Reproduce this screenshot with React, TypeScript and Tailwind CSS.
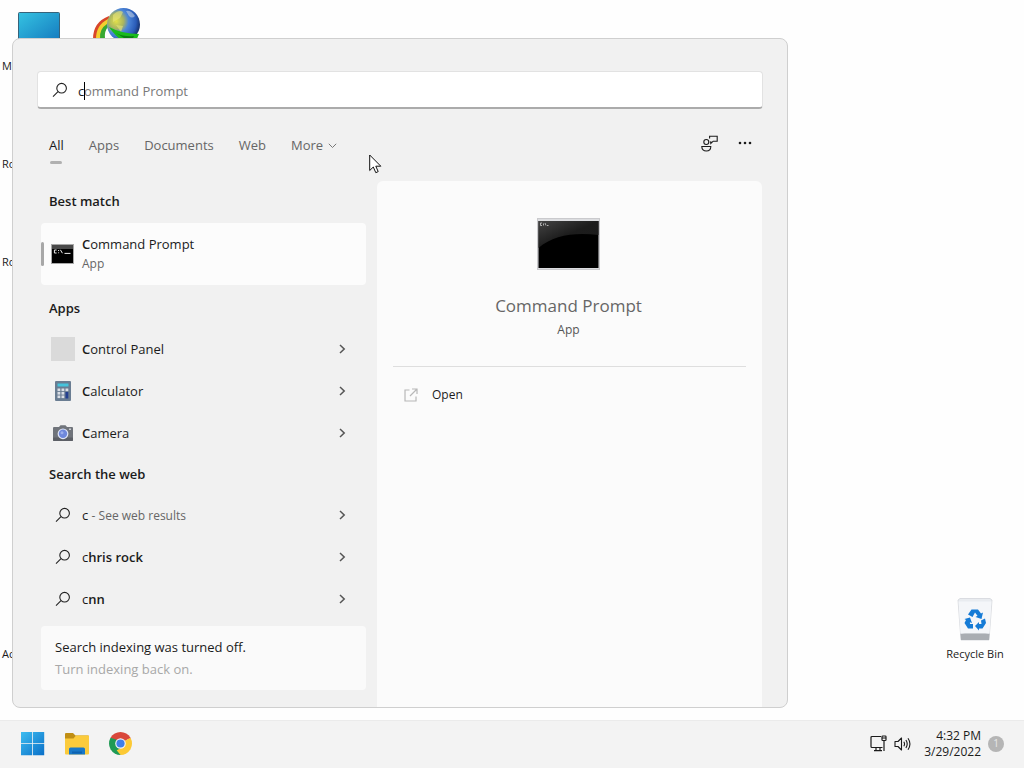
import type { ReactNode } from 'react';

const SearchIcon = () => (
  <svg width="16" height="16" viewBox="0 0 16 16" fill="none" stroke="#222" strokeWidth="1.1" aria-hidden="true">
    <circle cx="9.6" cy="6.2" r="4.8" />
    <path d="M6 9.7 L1 14.7" />
  </svg>
);

const ChevronRight = () => (
  <svg width="8" height="10" viewBox="0 0 8 10" fill="none" stroke="#555" strokeWidth="1.5" aria-hidden="true">
    <path d="M2 1 L6.2 5 L2 9" />
  </svg>
);

const ConsoleIcon = () => (
  <svg width="24" height="20" viewBox="0 0 24 20" aria-hidden="true">
    <rect x="0.5" y="0.5" width="22" height="19" fill="#000" stroke="#a8a8a8" />
    <rect x="1" y="1" width="21" height="4" fill="#4a4a4a" />
    <path d="M5.6 6 H3.4 V9 H5.6 M7.6 6 V7 M7.6 8.4 V9.2 M9.4 5.8 L11.4 9.2 M13.500 9.400 H19.500" fill="none" stroke="#eee" strokeWidth="1" />
  </svg>
);

const ConsoleIconLarge = () => (
  <svg width="64" height="54" viewBox="0 0 64 54" aria-hidden="true">
    <defs>
      <linearGradient id="gloss" x1="0" y1="0" x2="1" y2="1">
        <stop offset="0" stopColor="#444" />
        <stop offset="0.5" stopColor="#1c1c1c" />
        <stop offset="1" stopColor="#1a1a1a" />
      </linearGradient>
    </defs>
    <rect x="0.5" y="0.5" width="62" height="51" fill="#dcdde0" stroke="#cacacd" />
    <rect x="1.500" y="3" width="60" height="47" fill="#000" />
    <path d="M1.500 3 H61.500 V17 C38 14 16 17 1.500 30 Z" fill="url(#gloss)" />
    <path d="M5 5 H3.500 V7.500 H5 M6.500 5.500 V7.500 M8 5 L9 7.500 M10 7.500 H11.500" fill="none" stroke="#ccc" strokeWidth="0.8" />
  </svg>
);

const CalculatorIcon = () => (
  <svg width="16" height="20" viewBox="0 0 16 20" aria-hidden="true">
    <rect width="16" height="20" rx="1" fill="#6a7d92" />
    <rect x="2.500" y="2.500" width="11" height="3" fill="#45c4dc" />
    {[7.5, 11, 14.5].map((y) => (
      <g key={y} fill="#d9dee5">
        <rect x="2.500" y={y} width="2.800" height="2.600" />
        <rect x="6.500" y={y} width="2.800" height="2.600" />
      </g>
    ))}
    <rect x="10.500" y="7.500" width="2.800" height="2.600" fill="#d9dee5" />
    <rect x="10.500" y="11" width="2.800" height="6.500" fill="#24408f" />
  </svg>
);

const CameraIcon = () => (
  <svg width="20" height="16" viewBox="0 0 20 16" aria-hidden="true">
    <path d="M1 2 H6 L7.500 0.300 H12.500 L14 2 H19 Q20 2 20 3 V15 Q20 16 19 16 H1 Q0 16 0 15 V3 Q0 2 1 2 Z" fill="#70747b" />
    <rect y="12.500" width="20" height="3.500" rx="1" fill="#5c5f66" />
    <circle cx="10" cy="8.800" r="5.400" fill="#dfe5f7" />
    <circle cx="10" cy="8.800" r="4.200" fill="#6f88dc" />
    <circle cx="9" cy="7.800" r="1.500" fill="#9db0ec" />
    <rect x="16" y="3.500" width="2" height="1.500" fill="#c9cbd0" />
  </svg>
);

const FeedbackIcon = () => (
  <svg width="17" height="17" viewBox="0 0 17 17" fill="none" stroke="#1b1b1b" strokeWidth="1.1" aria-hidden="true">
    <circle cx="5.300" cy="7" r="2.500" />
    <path d="M0.800 11.500 H9.800 C9.800 14.500 8 16 5.300 16 C2.600 16 0.800 14.500 0.800 11.500 Z" />
    <path d="M8.600 3.600 V1.200 H16.200 V6.200 H12.200 L9.800 8.400 V6.200" />
  </svg>
);

const OpenIcon = () => (
  <svg width="14" height="14" viewBox="0 0 14 14" fill="none" stroke="#b8b8b8" strokeWidth="1.2" aria-hidden="true">
    <path d="M5.500 2 H1 V13 H12 V8.500" />
    <path d="M8 1 H13 V6 M13 1 L6 8" />
  </svg>
);

const WindowsLogo = () => (
  <svg width="24" height="24" viewBox="0 0 24 24" aria-hidden="true">
    <defs>
      <linearGradient id="win" x1="0" y1="0" x2="1" y2="1" gradientUnits="objectBoundingBox">
        <stop offset="0" stopColor="#3dbdf0" />
        <stop offset="1" stopColor="#0a6fc8" />
      </linearGradient>
    </defs>
    <path d="M0 0 H11.200 V11.200 H0 Z M12 0 H23.200 V11.200 H12 Z M0 12 H11.200 V23.200 H0 Z M12 12 H23.200 V23.200 H12 Z" fill="url(#win)" />
  </svg>
);

const FolderIcon = () => (
  <svg width="24" height="22" viewBox="0 0 24 22" aria-hidden="true">
    <path d="M0 1 Q0 0 1 0 H8 L10.500 2.500 H23 Q24 2.500 24 3.500 V10 H0 Z" fill="#c08e14" />
    <path d="M0 5.500 H8.500 L11 2.500 H23 Q24 2.500 24 3.500 V20.500 Q24 21.500 23 21.500 H1 Q0 21.500 0 20.500 Z" fill="#fbcb3c" />
    <path d="M4 21.500 V16 Q4 14.500 5.500 14.500 H18.500 Q20 14.500 20 16 V21.500 Z" fill="#1878c8" />
    <rect x="7" y="18.500" width="10" height="2" fill="#0d62b0" />
  </svg>
);

const ChromeIcon = () => (
  <svg width="23" height="23" viewBox="0 0 24 24" aria-hidden="true">
    <path d="M12 12 L1.610 6 A12 12 0 0 1 22.390 6 Z" fill="#d9473b" />
    <path d="M12 12 L22.390 6 A12 12 0 0 1 12 24 Z" fill="#fcc934" />
    <path d="M12 12 L12 24 A12 12 0 0 1 1.610 6 Z" fill="#1f9a55" />
    <path d="M12 6.500 H22.600 L22.390 6 L12 4 Z" fill="#d9473b" />
    <path d="M16.800 14.700 L12 24 L8 19 Z" fill="#fcc934" />
    <path d="M7.200 14.700 L1.610 6 L8 8 Z" fill="#1f9a55" />
    <circle cx="12" cy="12" r="5.500" fill="#f5f5f5" />
    <circle cx="12" cy="12" r="4.300" fill="#3f7fe8" />
  </svg>
);

const NetworkIcon = () => (
  <svg width="18" height="17" viewBox="0 0 18 17" fill="none" stroke="#1b1b1b" strokeWidth="1.2" aria-hidden="true">
    <path d="M11 1.500 H2 Q1 1.500 1 2.500 V11.500 Q1 12.500 2 12.500 H12.500" />
    <path d="M6 12.500 V15.500 M10 12.500 V15.500 M4 15.600 H12" />
    <rect x="12" y="1" width="4" height="4.500" rx="0.800" />
    <path d="M14 5.500 V16 M12 3 H16" />
  </svg>
);

const SpeakerIcon = () => (
  <svg width="18" height="16" viewBox="0 0 18 16" fill="none" stroke="#1b1b1b" strokeWidth="1.1" aria-hidden="true">
    <path d="M1 5.500 H4 L7.500 2 V14 L4 10.500 H1 Z" strokeLinejoin="round" />
    <path d="M9.800 5.700 Q11.300 8 9.800 10.300 M11.900 4 Q14.500 8 11.900 12 M14 2.300 Q17.900 8 14 13.700" />
  </svg>
);

const MonitorIcon = () => (
  <svg width="42" height="32" viewBox="0 0 42 32" aria-hidden="true">
    <defs>
      <linearGradient id="screen" x1="0" y1="0" x2="1" y2="1">
        <stop offset="0" stopColor="#35c3e2" />
        <stop offset="1" stopColor="#1377bd" />
      </linearGradient>
    </defs>
    <rect x="0.500" y="0.500" width="41" height="31" rx="1" fill="url(#screen)" stroke="#37637a" />
  </svg>
);

const DownloadManagerIcon = () => (
  <svg width="48" height="40" viewBox="0 0 48 40" aria-hidden="true">
    <defs>
      <radialGradient id="globe" cx="0.28" cy="0.4" r="0.75">
        <stop offset="0" stopColor="#e3e04a" />
        <stop offset="0.3" stopColor="#a9b560" />
        <stop offset="0.5" stopColor="#4c86d8" />
        <stop offset="0.8" stopColor="#2a5cb8" />
        <stop offset="1" stopColor="#142c62" />
      </radialGradient>
    </defs>
    <path d="M17 9 Q1 15 1 32 H9 Q8 20 17 14 Z" fill="#d8462a" />
    <path d="M16 12 Q4 18 4 32 H11 Q10 21 17 16 Z" fill="#f3cf2f" />
    <path d="M15 17 Q7 22 8 32 H13 Q12 24 16 20 Z" fill="#38a832" />
    <circle cx="31.500" cy="17.500" r="16.500" fill="url(#globe)" />
    <path d="M34 4 Q39 3 43 9 Q40 12 37 9 Z" fill="#d8e0e8" opacity="0.5" />
    <path d="M21 8 Q27 2 31 5 L28 11 L21 15 Z M24 18 L31 19 L29 25 Z" fill="#e8e67a" opacity="0.6" />
    <path d="M17 20 Q30 27 47 27 L44 34 H31 Q24 30 17 20 Z" fill="#19bb1c" />
    <path d="M24 26 Q32 30 42 29 L41 31 H32 Z" fill="#0a7d12" />
  </svg>
);

const RecycleBinIcon = () => (
  <svg width="36" height="43" viewBox="0 0 36 43" aria-hidden="true">
    <path d="M1 2 L3 0.500 H33 L35 2 L32 42 H4 Z" fill="#e9ecf0" stroke="#d3d6da" strokeWidth="0.800" />
    <path d="M1.500 3.500 H34.500 L32.500 35 H3.500 Z" fill="#f4f6f9" />
    <path d="M3.500 36 L8 35.500 H28 L32.500 36 L32 42 H4 Z" fill="#a9adb2" />
    <g fill="#157bd6">
      <path d="M11 16.500 L14.500 11.500 H21 L24 15.500 L26 14.500 L24.500 21 L18.500 19 L20.500 17.800 L18 14.500 L15.500 19 Z" />
      <path d="M24 22.500 L28 20.500 L29 25 L25.500 30.500 H22 V32.500 L18 28 L22 24 V26 H24.500 Z" />
      <path d="M16 30.500 H11 L7.500 25 L9 22 L7.500 21 L13 19.500 L15 25 L12.900 24.300 L13 26 H16 Z" />
    </g>
  </svg>
);

interface ResultRowProps {
  icon: ReactNode;
  children: ReactNode;
}

const ResultRow = ({ icon, children }: ResultRowProps) => (
  <li>
    <button type="button" className="flex h-[42px] w-full items-center pl-2.5 pr-5 text-left">
      <span className="flex w-6 shrink-0 justify-center">{icon}</span>
      <span className="ml-[7px] flex-1 pt-0.5">{children}</span>
      <ChevronRight />
    </button>
  </li>
);

const SectionTitle = ({ children }: { children: ReactNode }) => (
  <h2 className="flex h-10 items-center pl-2 pt-0.5 font-semibold">{children}</h2>
);

const apps = [
  { name: 'Control Panel', icon: <span className="size-6 bg-[#dadada]" /> },
  { name: 'Calculator', icon: <CalculatorIcon /> },
  { name: 'Camera', icon: <CameraIcon /> },
];

const SearchPanel = () => (
  <section
    aria-label="Search"
    className="relative flex min-w-0 flex-1 flex-col rounded-lg border border-[#cfcfcf] bg-[#f1f1f1]"
  >
    <label className="mx-6 mt-8 flex h-[38px] items-center rounded-sm border border-b-2 border-[#e2e2e2] border-b-[#ababab] bg-white pl-3.5">
      <SearchIcon />
      <span className="relative ml-2.5 mt-0.5 flex-1">
        <input
          type="text"
          aria-label="Search query"
          defaultValue="c"
          className="block w-full bg-transparent leading-5 outline-none"
        />
        <span className="pointer-events-none absolute left-1.5 top-0 flex items-center leading-5 text-[#7a7a7a]">
          <span className="absolute left-0 h-[18px] w-px bg-black" />
          ommand Prompt
        </span>
      </span>
    </label>

    <div className="flex h-[72px] items-center pl-9 pr-[31px]">
      <nav className="flex flex-1 items-center gap-[25px] pt-0.5 text-[#666]">
        <button type="button" className="relative text-[#1b1b1b]">
          All
          <span className="absolute inset-x-0 -bottom-2 mx-auto h-[3px] w-3 rounded-full bg-[#b0b0b0]" />
        </button>
        <button type="button">Apps</button>
        <button type="button">Documents</button>
        <button type="button">Web</button>
        <button type="button" className="flex items-center gap-[5px]">
          More
          <svg width="9" height="6" viewBox="0 0 9 6" fill="none" stroke="#777" aria-hidden="true">
            <path d="M0.800 0.800 L4.500 4.500 L8.200 0.800" />
          </svg>
        </button>
      </nav>
      <div className="flex items-center gap-5 pb-1">
        <button type="button" aria-label="Feedback">
          <FeedbackIcon />
        </button>
        <button type="button" aria-label="More options" className="pr-1">
          <svg width="14" height="4" viewBox="0 0 14 4" fill="#1b1b1b" aria-hidden="true">
            <circle cx="2" cy="2" r="1.300" />
            <circle cx="7" cy="2" r="1.300" />
            <circle cx="12" cy="2" r="1.300" />
          </svg>
        </button>
      </div>
    </div>

    <div className="flex flex-1 gap-[11px] pl-7 pr-[25px]">
      {/* Results */}
      <div className="w-[325px] shrink-0">
        <SectionTitle>Best match</SectionTitle>
        <button
          type="button"
          className="mb-[3px] mt-0.5 flex h-[62px] w-full items-center rounded-sm bg-[#fcfcfc] text-left"
        >
          <span className="h-6 w-[3px] rounded-full bg-[#a8a8a8]" />
          <span className="ml-[7px]">
            <ConsoleIcon />
          </span>
          <span className="ml-[7px]">
            <span className="block leading-5">
              <span className="font-semibold">C</span>ommand Prompt
            </span>
            <span className="block text-xs leading-5 text-[#666]">App</span>
          </span>
        </button>

        <SectionTitle>Apps</SectionTitle>
        <ul>
          {apps.map((app) => (
            <ResultRow key={app.name} icon={app.icon}>
              <span className="font-semibold">{app.name[0]}</span>
              {app.name.slice(1)}
            </ResultRow>
          ))}
        </ul>

        <SectionTitle>Search the web</SectionTitle>
        <ul>
          <ResultRow icon={<SearchIcon />}>
            c <span className="text-xs text-[#666]">- See web results</span>
          </ResultRow>
          <ResultRow icon={<SearchIcon />}>
            c<span className="font-semibold">hris rock</span>
          </ResultRow>
          <ResultRow icon={<SearchIcon />}>
            c<span className="font-semibold">nn</span>
          </ResultRow>
        </ul>

        <div className="mt-1.5 flex h-16 flex-col justify-center rounded-sm bg-[#fafafa] pl-3.5">
          <p className="leading-[22px]">Search indexing was turned off.</p>
          <a href="#indexing" className="leading-[22px] text-[#a8a8a8]">
            Turn indexing back on.
          </a>
        </div>
      </div>

      {/* Preview of the selected result */}
      <div className="flex min-w-0 flex-1 flex-col rounded-t-md bg-[#fbfbfb] px-4 pt-[37px]">
        <div className="flex flex-col items-center border-b border-[#dedede] pb-[26px] pr-0.5">
          <ConsoleIconLarge />
          <h1 className="mt-[22px] text-[17px] leading-6 text-[#666]">Command Prompt</h1>
          <p className="mt-0.5 text-xs leading-5 text-[#555]">App</p>
        </div>
        <button type="button" className="mt-3.5 flex h-7 items-center gap-3.5 pl-[11px] text-xs">
          <OpenIcon />
          Open
        </button>
      </div>
    </div>
  </section>
);

const Taskbar = () => (
  <footer className="flex h-12 shrink-0 items-center border-t border-[#ebebeb] bg-[#f3f3f3] pb-0.5 pl-[21px] pr-5">
    <div className="flex flex-1 items-center gap-5">
      <button type="button" aria-label="Start">
        <WindowsLogo />
      </button>
      <button type="button" aria-label="File Explorer">
        <FolderIcon />
      </button>
      <button type="button" aria-label="Google Chrome">
        <ChromeIcon />
      </button>
    </div>
    <div className="flex items-center">
      <button type="button" aria-label="Network">
        <NetworkIcon />
      </button>
      <button type="button" aria-label="Volume" className="ml-1.5">
        <SpeakerIcon />
      </button>
      <div className="ml-3 text-right text-xs leading-4">
        <p>4:32 PM</p>
        <p>3/29/2022</p>
      </div>
      <span className="ml-[7px] flex size-4 items-center justify-center rounded-full bg-[#b5b5b5] text-[10px] text-[#e8e8e8]">
        1
      </span>
    </div>
  </footer>
);

export default function App() {
  return (
    <div className="flex min-h-screen flex-col overflow-hidden bg-[#fefefe] font-['Open_Sans','Noto_Sans',sans-serif] text-[13px] text-[#1b1b1b]">
      <main className="relative flex flex-1 pb-3 pl-3 pt-[38px]">
        {/* Desktop shortcuts, partly under the search panel */}
        <div className="absolute left-[18px] top-3">
          <MonitorIcon />
        </div>
        <div className="absolute left-[92px] top-[7px]">
          <DownloadManagerIcon />
        </div>
        <div className="text-[11px] leading-4">
          <span className="absolute left-0.5 top-[58px]">M</span>
          <span className="absolute left-0.5 top-[156px]">Ro</span>
          <span className="absolute left-0.5 top-[254px]">Ro</span>
          <span className="absolute left-0.5 top-[646px]">Ac</span>
        </div>

        <SearchPanel />

        <div className="flex w-[236px] shrink-0 flex-col items-end justify-end pb-[46px] pr-3">
          <a href="#recycle-bin" className="flex w-[74px] flex-col items-center text-[11px] leading-4">
            <RecycleBinIcon />
            <span className="mt-[5px]">Recycle Bin</span>
          </a>
        </div>

        {/* Mouse pointer */}
        <svg className="absolute left-[369px] top-[154px]" width="13" height="20" viewBox="0 0 13 20" aria-hidden="true">
          <path
            d="M0.700 1 V16.500 L4.300 13 L6.800 18.700 L9.200 17.600 L6.800 12.200 H11.800 Z"
            fill="#fff"
            stroke="#111"
            strokeWidth="1"
          />
        </svg>
      </main>
      <Taskbar />
    </div>
  );
}
